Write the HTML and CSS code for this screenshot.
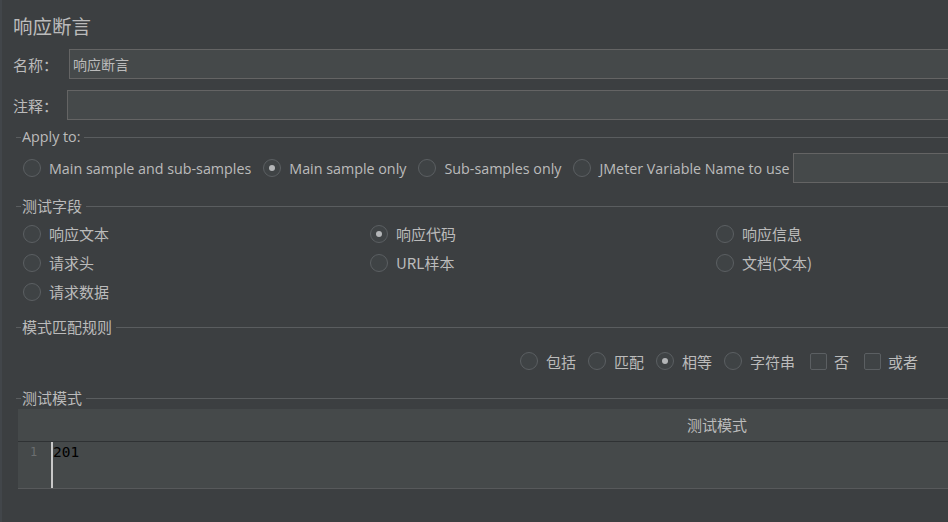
FILE: index.html
```html
<!DOCTYPE html>
<html lang="zh">
<head>
<meta charset="utf-8">
<title>响应断言</title>
<link rel="stylesheet" href="styles.css">
</head>
<body>
<div class="page">
  <div class="title">响应断言</div>

  <div class="row row-name">
    <span class="label">名称：</span>
    <div class="field">响应断言</div>
  </div>
  <div class="row row-comment">
    <span class="label">注释：</span>
    <div class="field"></div>
  </div>

  <div class="group-title group-apply"><span class="latin">Apply to:</span></div>
  <div class="apply-row">
    <label class="opt latin"><span class="radio"></span>Main sample and sub-samples</label>
    <label class="opt latin"><span class="radio on"></span>Main sample only</label>
    <label class="opt latin"><span class="radio"></span>Sub-samples only</label>
    <label class="opt latin"><span class="radio"></span>JMeter Variable Name to use</label>
    <div class="field var-field"></div>
  </div>

  <div class="group-title group-fields"><span>测试字段</span></div>
  <div class="fields-grid">
    <label class="opt"><span class="radio"></span>响应文本</label>
    <label class="opt"><span class="radio on"></span>响应代码</label>
    <label class="opt"><span class="radio"></span>响应信息</label>
    <label class="opt"><span class="radio"></span>请求头</label>
    <label class="opt"><span class="radio"></span>URL样本</label>
    <label class="opt"><span class="radio"></span>文档(文本)</label>
    <label class="opt"><span class="radio"></span>请求数据</label>
  </div>

  <div class="group-title group-rules"><span>模式匹配规则</span></div>
  <div class="rules-row">
    <label class="opt"><span class="radio"></span>包括</label>
    <label class="opt"><span class="radio"></span>匹配</label>
    <label class="opt"><span class="radio on"></span>相等</label>
    <label class="opt"><span class="radio"></span>字符串</label>
    <label class="opt opt-check"><span class="check"></span>否</label>
    <label class="opt opt-check"><span class="check"></span>或者</label>
  </div>

  <div class="group-title group-patterns"><span>测试模式</span></div>
  <div class="table">
    <div class="thead">测试模式</div>
    <div class="tbody">
      <span class="gutter">1</span>
      <span class="code">201</span>
    </div>
  </div>
</div>
</body>
</html>
```

FILE: styles.css
```css
html, body {
  margin: 0;
  padding: 0;
  height: 100%;
  overflow: hidden;
}

body {
  background: #3c3f41;
  color: #bbbbbb;
  font-family: "Noto Sans CJK SC", "Noto Sans", sans-serif;
  font-size: 15px;
}

.page {
  width: 1440px;
  height: 522px;
  border-left: 2px solid #42464a;
  box-sizing: border-box;
}

.latin {
  font-family: "Open Sans", "Noto Sans CJK SC", sans-serif;
  font-size: 14.3px;
}

.title {
  height: 49px;
  box-sizing: border-box;
  padding: 13px 0 0 11px;
  line-height: 26px;
  font-size: 19.5px;
}

.row {
  display: flex;
  align-items: center;
  height: 30px;
  padding-left: 11px;
}

.row-name .label { width: 56px; }
.row-comment { margin-top: 11px; }
.row-comment .label { width: 54px; }

.field {
  flex: 1;
  height: 30px;
  box-sizing: border-box;
  background: #45494a;
  border: 1px solid #646464;
  padding: 0 3px;
  line-height: 28px;
  font-size: 14px;
}

.group-title {
  display: flex;
  align-items: center;
  height: 18px;
  margin-left: 14px;
  line-height: 18px;
}
.group-title::before {
  content: "";
  width: 5px;
  border-top: 1px solid #5a5d5f;
  margin-right: 1px;
}
.group-title::after {
  content: "";
  flex: 1;
  border-top: 1px solid #5a5d5f;
  margin-left: 4px;
}

.group-apply { margin-top: 8px; }
.group-fields { margin-top: 14px; }
.group-rules { margin-top: 12px; }
.group-patterns { margin-top: 13px; }

.opt {
  display: flex;
  align-items: center;
  white-space: nowrap;
}

.radio {
  width: 18px;
  height: 18px;
  box-sizing: border-box;
  border: 1px solid #5b5f62;
  border-radius: 50%;
  background: #3f4345;
  margin-right: 8px;
  display: flex;
  align-items: center;
  justify-content: center;
  flex: none;
}
.radio.on::after {
  content: "";
  width: 6px;
  height: 6px;
  border-radius: 50%;
  background: #b4b6b8;
}

.check {
  width: 17px;
  height: 17px;
  box-sizing: border-box;
  border: 1px solid #5b5f62;
  border-radius: 2px;
  background: #3f4345;
  margin-right: 8px;
  flex: none;
}

.apply-row {
  display: flex;
  align-items: center;
  gap: 12px;
  height: 30px;
  margin-top: 7px;
  padding-left: 21px;
}
.var-field {
  flex: none;
  width: 640px;
  margin-left: -9px;
}

.fields-grid {
  display: grid;
  grid-template-columns: 347px 346px 347px;
  grid-auto-rows: 29px;
  margin-top: 4px;
  padding-left: 21px;
}
.fields-grid .opt { height: 29px; }

.rules-row {
  display: flex;
  align-items: center;
  gap: 12px;
  height: 30px;
  margin-top: 10px;
  padding-left: 518px;
}
.rules-row .opt-check { margin-left: 3px; }
.rules-row .opt-check .check { margin-right: 7px; }

.table {
  width: 1398px;
  margin: 2px 0 0 16px;
}
.thead {
  height: 32px;
  background: #45494a;
  border-bottom: 1px solid #2f3234;
  text-align: center;
  line-height: 32px;
  font-size: 15px;
}
.tbody {
  display: flex;
  height: 46px;
  background: #45494a;
  border-bottom: 1px solid #57595b;
}
.gutter {
  width: 35px;
  box-sizing: border-box;
  padding-left: 12px;
  color: #6b6e70;
  font-family: "DejaVu Sans Mono", monospace;
  font-size: 12px;
  line-height: 20px;
  border-right: 2px solid #c8c8c8;
}
.code {
  padding-left: 0;
  color: #000000;
  font-family: "DejaVu Sans Mono", monospace;
  font-size: 14.5px;
  line-height: 20px;
}
```
